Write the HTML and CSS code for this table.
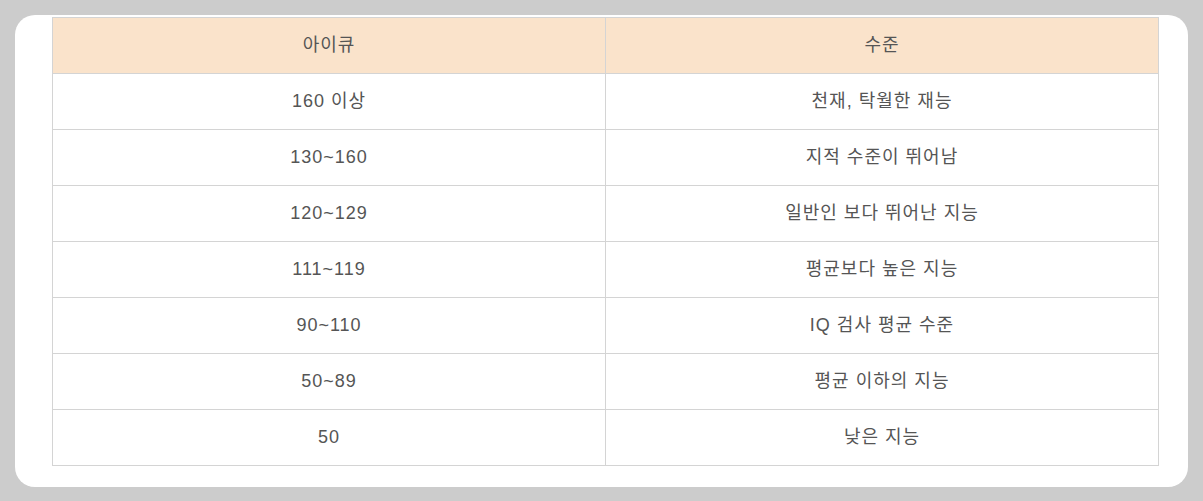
FILE: index.html
```html
<!DOCTYPE html>
<html lang="ko">
<head>
<meta charset="UTF-8" />
<meta name="viewport" content="width=device-width, initial-scale=1" />
<title>아이큐 수준</title>
<link rel="stylesheet" href="styles.css">
</head>
<body>

<div class="card">
  <table class="iq-table">
    <thead>
      <tr><th>아이큐</th><th>수준</th></tr>
    </thead>
    <tbody>
      <tr><td>160 이상</td><td>천재, 탁월한 재능</td></tr>
      <tr><td>130~160</td><td>지적 수준이 뛰어남</td></tr>
      <tr><td>120~129</td><td>일반인 보다 뛰어난 지능</td></tr>
      <tr><td>111~119</td><td>평균보다 높은 지능</td></tr>
      <tr><td>90~110</td><td>IQ 검사 평균 수준</td></tr>
      <tr><td>50~89</td><td>평균 이하의 지능</td></tr>
      <tr><td>50</td><td>낮은 지능</td></tr>
    </tbody>
  </table>
</div>

</body>
</html>
```

FILE: styles.css
```css
body { margin: 0; padding: 15px; background: #cccccc; font-family: "Liberation Sans", Arial, "Noto Sans CJK KR", sans-serif; }
.card { background: #fff; border-radius: 20px; padding: 2px 29px 21px 37px; }
.iq-table { width: 100%; border-collapse: collapse; color: #555; font-size: 18px; line-height: 20px; letter-spacing: 1px; }
.iq-table th, .iq-table td { border: 1px solid #d4d4d4; height: 56px; padding: 0 0 1px; box-sizing: border-box; text-align: center; font-weight: normal; width: 50%; }
.iq-table th { background: #fae3cb; }
```
